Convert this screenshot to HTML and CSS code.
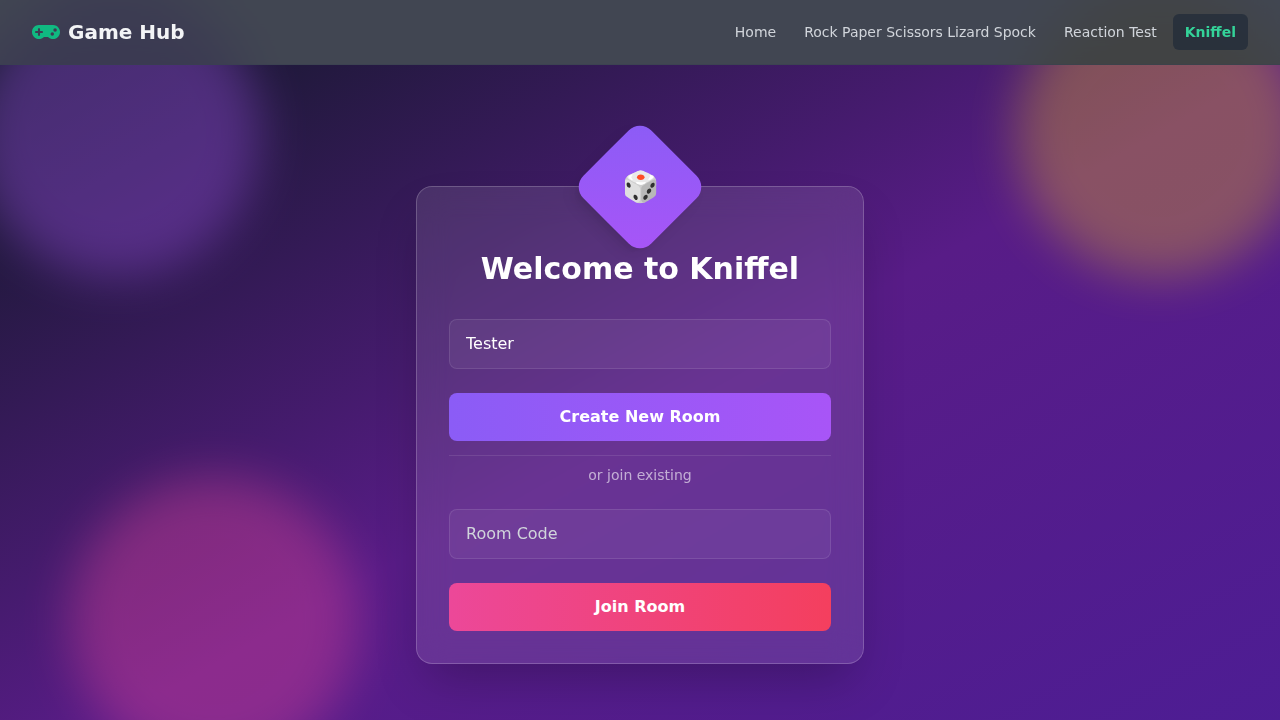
FILE: index.html
```html
<!DOCTYPE html>
<html lang="en">
<head>
<meta charset="utf-8">
<meta name="viewport" content="width=device-width, initial-scale=1">
<title>Game Hub - Kniffel</title>
<link rel="stylesheet" href="styles.css">
</head>
<body>
<header class="navbar">
  <a class="brand" href="#">
    <svg class="brand-icon" viewBox="0 96 640 320" fill="currentColor" aria-hidden="true"><path d="M480.07 96H160a160 160 0 1 0 114.24 272h91.5A160 160 0 1 0 480.07 96zM248 268a12 12 0 0 1-12 12h-52v52a12 12 0 0 1-12 12h-24a12 12 0 0 1-12-12v-52H84a12 12 0 0 1-12-12v-24a12 12 0 0 1 12-12h52v-52a12 12 0 0 1 12-12h24a12 12 0 0 1 12 12v52h52a12 12 0 0 1 12 12zm216 76a40 40 0 1 1 40-40 40 40 0 0 1-40 40zm64-96a40 40 0 1 1 40-40 40 40 0 0 1-40 40z"/></svg>
    <span>Game Hub</span>
  </a>
  <nav class="nav-links">
    <a class="nav-link" href="#">Home</a>
    <a class="nav-link" href="#">Rock Paper Scissors Lizard Spock</a>
    <a class="nav-link" href="#">Reaction Test</a>
    <a class="nav-link nav-link-active" href="#" aria-current="page">Kniffel</a>
  </nav>
</header>
<main class="lobby">
  <div class="blob blob-purple"></div>
  <div class="blob blob-yellow"></div>
  <div class="blob blob-pink"></div>
  <section class="card">
    <div class="badge"><span class="badge-icon">🎲</span></div>
    <h1 class="title">Welcome to Kniffel</h1>
    <form class="form">
      <input class="field" type="text" value="Tester" aria-label="Your name">
      <button class="button button-create" type="button">Create New Room</button>
      <p class="divider">or join existing</p>
      <input class="field" type="text" placeholder="Room Code" aria-label="Room Code">
      <button class="button button-join" type="button">Join Room</button>
    </form>
  </section>
</main>
</body>
</html>
```
FILE: styles.css
```css
*, *::before, *::after { box-sizing: border-box; }

html { scrollbar-width: none; }

body {
  margin: 0;
  background: #fff;
  color: #fff;
  font-family: "DejaVu Sans", sans-serif;
  font-size: 16px;
  line-height: 24px;
  overflow-x: hidden;
}

.navbar {
  position: sticky;
  top: 0;
  z-index: 10;
  display: flex;
  align-items: center;
  justify-content: space-between;
  height: 65px;
  padding: 0 32px;
  background: rgba(17, 24, 39, 0.8);
  border-bottom: 1px solid rgba(55, 65, 81, 0.5);
  backdrop-filter: blur(12px);
}

.brand {
  display: flex;
  align-items: center;
  gap: 8px;
  color: #f3f4f6;
  font-size: 20px;
  font-weight: 700;
  line-height: 28px;
  text-decoration: none;
}

.brand-icon { width: 28px; height: 14px; color: #10b981; }

.nav-links { display: flex; gap: 4px; }

.nav-link {
  padding: 8px 12px;
  border-radius: 6px;
  color: #d1d5db;
  font-size: 14px;
  line-height: 20px;
  text-decoration: none;
}

.nav-link-active {
  background: rgba(31, 41, 55, 0.7);
  color: #34d399;
  font-weight: 600;
}

.lobby {
  position: relative;
  display: flex;
  align-items: center;
  justify-content: center;
  min-height: 100vh;
  padding: 16px;
  background: linear-gradient(to bottom right, #111827, #581c87, #4c1d95);
}

.blob {
  position: absolute;
  width: 288px;
  height: 288px;
  border-radius: 50%;
  filter: blur(24px);
}

.blob-purple { top: -76px; left: -28px; background: #a855f7; opacity: 0.35; }
.blob-yellow { top: -76px; right: -24px; background: #facc15; opacity: 0.3; }
.blob-pink { bottom: 20px; left: 70px; background: #ec4899; opacity: 0.35; }

.card {
  position: relative;
  width: 100%;
  max-width: 448px;
  padding: 64px 32px 32px;
  border: 1px solid rgba(255, 255, 255, 0.2);
  border-radius: 16px;
  background: rgba(255, 255, 255, 0.1);
  box-shadow: 0 25px 50px -12px rgba(0, 0, 0, 0.25);
  backdrop-filter: blur(16px);
}

.badge {
  position: absolute;
  top: -48px;
  left: calc(50% - 48px);
  display: flex;
  align-items: center;
  justify-content: center;
  width: 96px;
  height: 96px;
  border-radius: 16px;
  background: linear-gradient(to bottom right, #8b5cf6, #a855f7);
  box-shadow: 0 10px 15px -3px rgba(0, 0, 0, 0.1), 0 4px 6px -4px rgba(0, 0, 0, 0.1);
  transform: rotate(45deg);
}

.badge-icon {
  font-size: 30px;
  line-height: 36px;
  transform: rotate(-45deg);
}

.title {
  margin: 0 0 32px;
  font-size: 30px;
  font-weight: 700;
  line-height: 36px;
  text-align: center;
}

.form { display: flex; flex-direction: column; }

.field {
  width: 100%;
  height: 50px;
  margin: 0 0 24px;
  padding: 11px 16px 13px;
  border: 1px solid rgba(255, 255, 255, 0.1);
  border-radius: 8px;
  background: rgba(255, 255, 255, 0.05);
  color: #fff;
  font: inherit;
}

.field::placeholder { color: #d1d5db; opacity: 1; }

.button {
  height: 48px;
  padding: 12px 16px;
  border: 0;
  border-radius: 8px;
  color: #fff;
  font: inherit;
  font-weight: 600;
  cursor: pointer;
}

.button-create { background: linear-gradient(to right, #8b5cf6, #a855f7); }
.button-join { background: linear-gradient(to right, #ec4899, #f43f5e); }

.divider {
  margin: 14px 0 24px;
  padding-top: 9px;
  border-top: 1px solid rgba(255, 255, 255, 0.1);
  color: rgba(255, 255, 255, 0.6);
  font-size: 14px;
  line-height: 20px;
  text-align: center;
}
```
